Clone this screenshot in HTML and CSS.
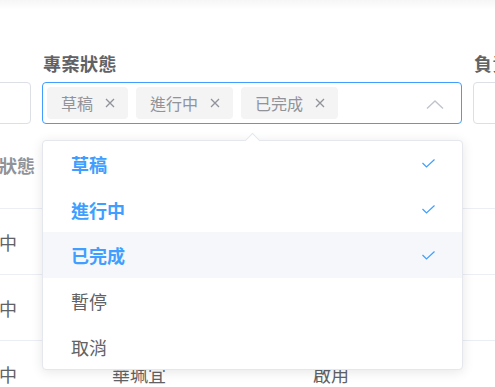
FILE: index.html
```html
<!DOCTYPE html>
<html lang="zh-Hant">
<head>
    <meta charset="UTF-8">
    <meta name="viewport" content="width=device-width, initial-scale=1.0">
    <title>專案篩選</title>
    <link rel="stylesheet" href="styles.css">
</head>
<body>
    <div class="top-edge"></div>

    <div class="filters">
        <div class="field field-name">
            <label class="field-label">專案名稱</label>
            <div class="input"></div>
        </div>
        <div class="field field-status">
            <label class="field-label">專案狀態</label>
            <div class="select is-focus">
                <span class="tag">草稿 <svg class="tag-close" viewBox="0 0 10 10"><path d="M1 1 L9 9 M9 1 L1 9"/></svg></span>
                <span class="tag">進行中 <svg class="tag-close" viewBox="0 0 10 10"><path d="M1 1 L9 9 M9 1 L1 9"/></svg></span>
                <span class="tag">已完成 <svg class="tag-close" viewBox="0 0 10 10"><path d="M1 1 L9 9 M9 1 L1 9"/></svg></span>
                <svg class="select-arrow" viewBox="0 0 18 9"><path d="M1 8.5 L9 1 L17 8.5"/></svg>
            </div>
        </div>
        <div class="field field-owner">
            <label class="field-label">負責人</label>
            <div class="input"></div>
        </div>
    </div>

    <div class="table">
        <div class="row head">
            <div class="cell">專案狀態</div>
            <div class="cell">負責人</div>
            <div class="cell">帳號狀態</div>
        </div>
        <div class="row">
            <div class="cell">進行中</div>
            <div class="cell">陳志明</div>
            <div class="cell">啟用</div>
        </div>
        <div class="row">
            <div class="cell">進行中</div>
            <div class="cell">林雅婷</div>
            <div class="cell">啟用</div>
        </div>
        <div class="row">
            <div class="cell">進行中</div>
            <div class="cell">華珮宜</div>
            <div class="cell">啟用</div>
        </div>
    </div>

    <!-- 下拉選單 -->
    <div class="dropdown">
        <div class="dropdown-arrow"></div>
        <ul class="options">
            <li class="option selected">草稿 <svg class="check" viewBox="0 0 13 9"><path d="M0.5 4 L4.5 8 L12.5 0.5"/></svg></li>
            <li class="option selected">進行中 <svg class="check" viewBox="0 0 13 9"><path d="M0.5 4 L4.5 8 L12.5 0.5"/></svg></li>
            <li class="option selected hover">已完成 <svg class="check" viewBox="0 0 13 9"><path d="M0.5 4 L4.5 8 L12.5 0.5"/></svg></li>
            <li class="option">暫停</li>
            <li class="option">取消</li>
        </ul>
    </div>
</body>
</html>
```

FILE: styles.css
```css
body { margin: 0; width: 495px; height: 387px; overflow: hidden; background: #fff; font-family: "Noto Sans CJK TC", "Noto Sans", sans-serif; color: #606266; }
.top-edge { height: 10px; background: linear-gradient(rgba(0,0,0,0.035), rgba(0,0,0,0)); }

.filters { display: flex; gap: 11px; margin-left: -189px; padding-top: 41px; }
.field { display: flex; flex-direction: column; flex-shrink: 0; }
.field-name { width: 220px; }
.field-status { width: 420px; }
.field-owner { width: 220px; }
.field-label { font-size: 18px; font-weight: bold; line-height: 24px; margin-bottom: 7px; color: #606266; padding-left: 1px; letter-spacing: 0.5px; }
.input { height: 42px; box-sizing: border-box; border: 1px solid #dcdfe6; border-radius: 4px; }

.select { height: 42px; box-sizing: border-box; border: 1px solid #409eff; border-radius: 4px; display: flex; align-items: center; gap: 8px; padding: 0 17px 0 4px; }
.tag { display: flex; align-items: center; height: 32px; box-sizing: border-box; padding: 0 13px 0 14px; background: #f4f4f5; border-radius: 4px; color: #909399; font-size: 16px; gap: 12px; }
.tag-close { width: 10px; height: 10px; fill: none; stroke: #909399; stroke-width: 1.3; }
.select-arrow { width: 18px; height: 9px; margin-left: auto; margin-top: 2px; fill: none; stroke: #c0c4cc; stroke-width: 1.4; }

.table { margin-left: -37px; }
.row { display: grid; grid-template-columns: 149px 201px 1fr; height: 65px; align-items: center; border-bottom: 1px solid #ebeef5; font-size: 18px; color: #606266; }
.row.head { align-items: start; padding-top: 29px; box-sizing: border-box; height: 85px; font-weight: bold; color: #909399; line-height: 24px; }

.dropdown { position: absolute; left: 42px; top: 140px; width: 421px; box-sizing: border-box; background: #fff; border: 1px solid #e4e7ed; border-radius: 4px; box-shadow: 0 2px 12px 0 rgba(0,0,0,0.1); }
.dropdown-arrow { position: absolute; left: 204px; top: -6px; width: 10px; height: 10px; background: #fff; border-top: 1px solid #e4e7ed; border-left: 1px solid #e4e7ed; transform: rotate(45deg); }
.options { list-style: none; margin: 0; padding: 0; position: relative; }
.option { height: 45.7px; display: flex; align-items: center; justify-content: space-between; padding: 0 27px 0 28px; font-size: 18px; color: #606266; }
.option.selected { color: #409eff; font-weight: bold; }
.option.hover { background: #f5f7fa; }
.check { width: 13px; height: 9px; fill: none; stroke: #409eff; stroke-width: 1.2; }
```
